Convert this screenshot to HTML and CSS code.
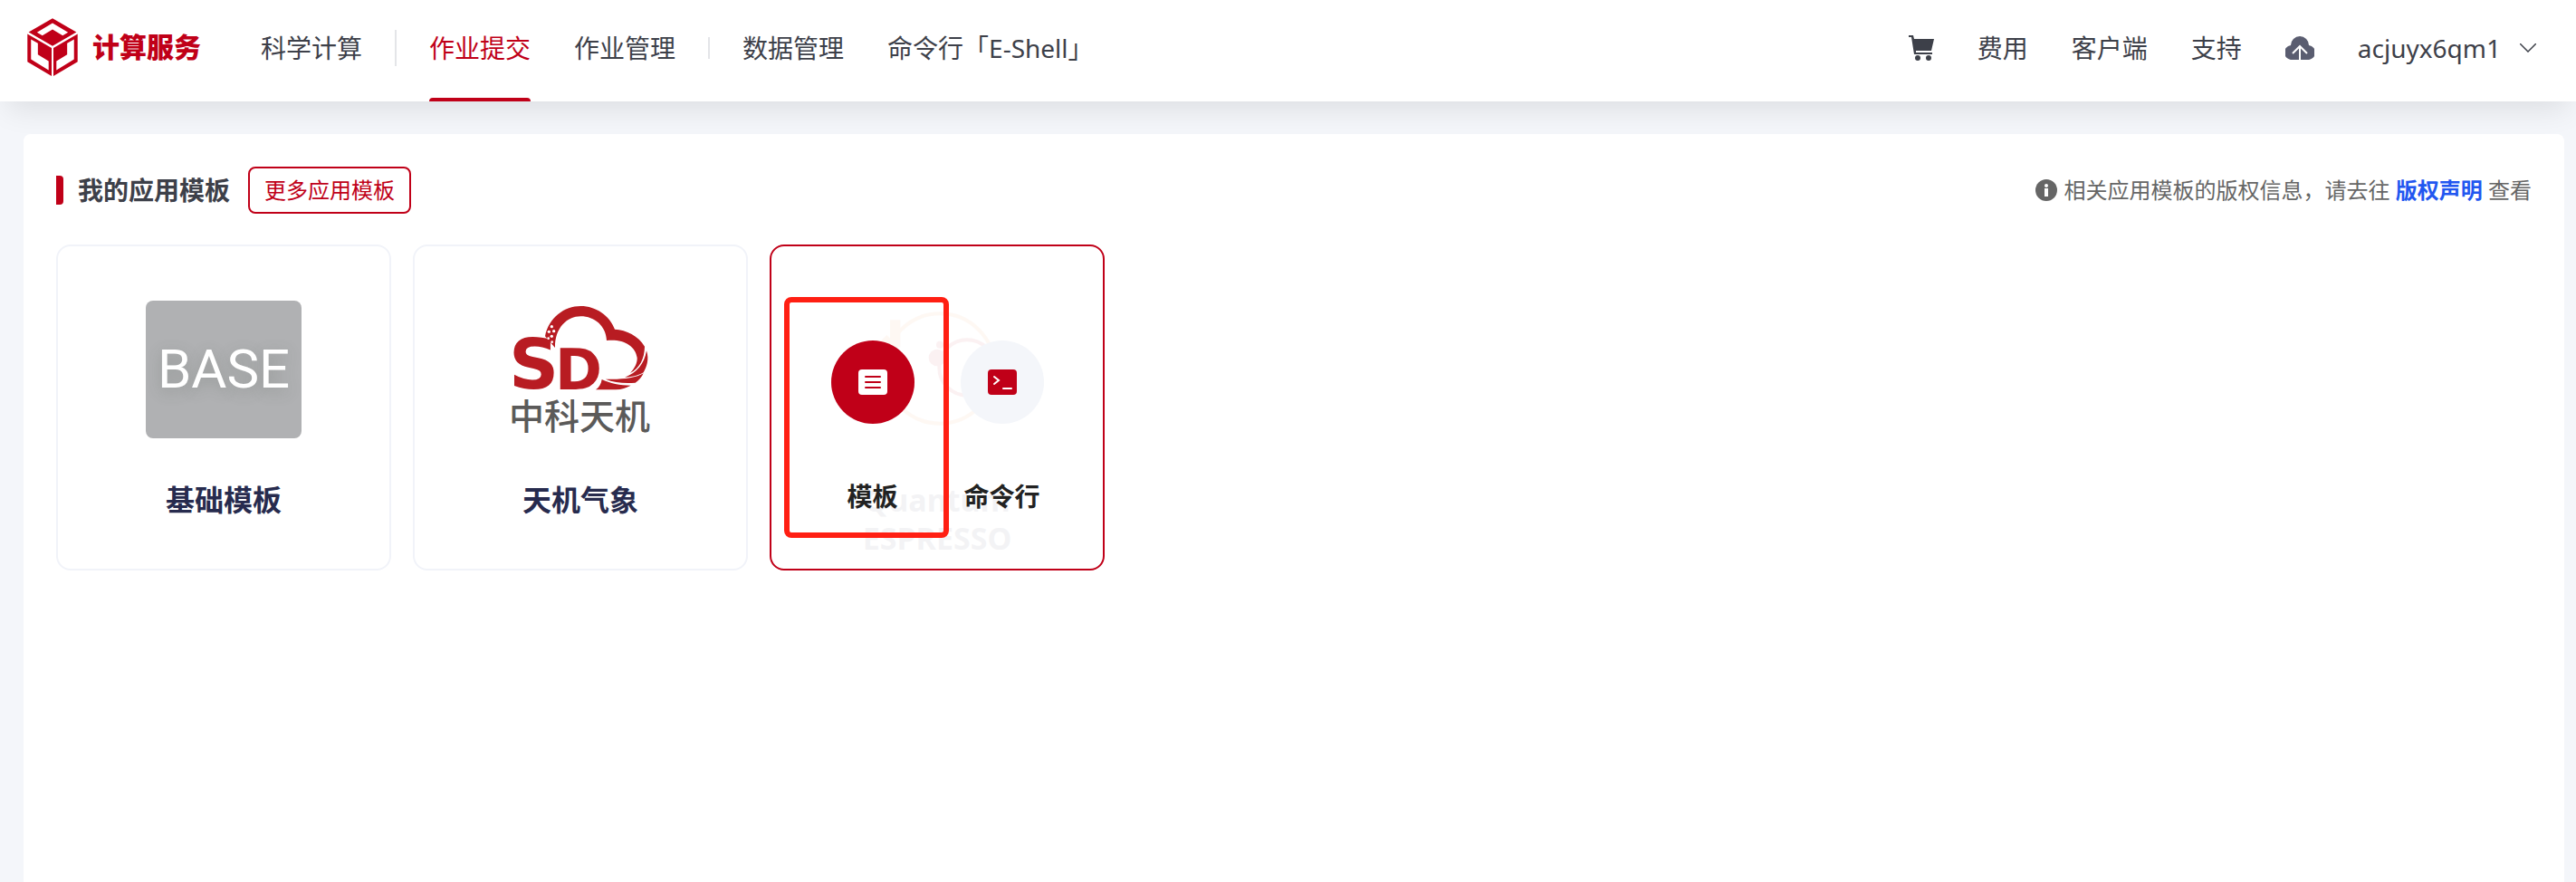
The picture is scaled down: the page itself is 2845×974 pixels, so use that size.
FILE: index.html
```html
<!DOCTYPE html>
<html lang="zh-CN">
<head>
    <meta charset="UTF-8">
    <meta name="viewport" content="width=device-width, initial-scale=1.0">
    <title>计算服务</title>
    <link rel="stylesheet" href="styles.css">
</head>
<body>
    <header class="header">
        <a class="logo" href="#">
            <svg class="logo-icon" viewBox="30 28 168 194">
                <path fill-rule="evenodd" d="M114 29L194 75L114 121L34 75ZM62 76L80 86L114 66L148 86L166 76L114 45Z"/>
                <path fill-rule="evenodd" d="M30 81L111 128V222L30 174ZM42 99V166L101 202V172L65 150V112Z"/>
                <path fill-rule="evenodd" d="M198 81L117 128V222L198 174ZM186 99V166L127 202V172L163 150V112Z"/>
            </svg>
            <span class="logo-text">计算服务</span>
        </a>
        <nav class="nav">
            <a href="#">科学计算</a>
            <span class="line line-tall"></span>
            <a class="active" href="#">作业提交</a>
            <a class="next" href="#">作业管理</a>
            <span class="line"></span>
            <a href="#">数据管理</a>
            <a class="next" href="#">命令行「E-Shell」</a>
        </nav>
        <div class="tools">
            <a href="#" aria-label="购物车">
                <svg class="cart" viewBox="0 0 28 28">
                    <path d="M0 0H5L6 4H28L25 17H8V19H26V21H6L3 2H0Z"/>
                    <circle cx="10" cy="25" r="3"/>
                    <circle cx="22" cy="25" r="3"/>
                </svg>
            </a>
            <a href="#">费用</a>
            <a href="#">客户端</a>
            <a href="#">支持</a>
            <a href="#" aria-label="上传">
                <svg class="cloud" viewBox="0 0 32 26">
                    <path d="M8 26A8 8 0 0 1 6 10A10 10 0 0 1 26 10A8 8 0 0 1 24 26Z"/>
                    <path class="arrow" d="M16 26V12M8 19L16 11L24 19"/>
                </svg>
            </a>
            <button class="user" type="button">
                acjuyx6qm1
                <svg class="chevron" viewBox="0 0 18 10"><path d="M0 0L9 9L18 0"/></svg>
            </button>
        </div>
    </header>

    <main class="panel">
        <div class="panel-head">
            <h1 class="title">我的应用模板</h1>
            <button class="more" type="button">更多应用模板</button>
            <p class="tip">
                <svg class="info" viewBox="0 0 24 24">
                    <circle cx="12" cy="12" r="12"/>
                    <path d="M10 10H14V19H10Z"/>
                    <circle class="dot" cx="12" cy="7" r="2"/>
                </svg>
                <span>相关应用模板的版权信息，请去往 <a href="#">版权声明</a> 查看</span>
            </p>
        </div>

        <div class="cards">
            <section class="card">
                <div class="picture base">BASE</div>
                <h2>基础模板</h2>
            </section>

            <section class="card">
                <svg class="picture" viewBox="345 246 516 456">
                    <g fill="#b81c22">
                        <path d="M486 364C498 302 550 264 604 264C655 264 700 296 717 341C755 343 795 362 816 398C815 440 800 468 768 486C785 468 792 450 791 435C785 395 745 372 690 378C688 330 650 298 604 298C560 298 518 335 519 402Z"/>
                        <path d="M822 412C832 440 822 468 812 484C795 494 770 500 750 500C790 485 815 455 822 412Z"/>
                        <path d="M686 506C740 508 785 503 812 487C806 500 797 510 785 518C750 521 715 518 686 506Z"/>
                        <path d="M674 507C700 520 735 527 770 527C755 535 740 540 720 541H654C665 533 672 522 674 507Z"/>
                        <text class="sd" x="366" y="538" font-size="230">S</text>
                        <text class="sd" x="519" y="540" font-size="188">D</text>
                    </g>
                    <g fill="#fff">
                        <circle cx="508" cy="332" r="5"/>
                        <circle cx="499" cy="349" r="5"/>
                        <circle cx="515" cy="347" r="5"/>
                        <circle cx="508" cy="364" r="5"/>
                        <circle cx="497" cy="371" r="4"/>
                        <circle cx="509" cy="383" r="4"/>
                    </g>
                    <text class="brand" x="366" y="672">中科天机</text>
                </svg>
                <h2>天机气象</h2>
            </section>

            <section class="card selected">
                <div class="faded">
                    <svg class="picture" viewBox="345 246 516 456">
                        <g fill="none" stroke-width="12">
                            <circle cx="612" cy="471" r="182" stroke="#f08030"/>
                            <circle cx="702" cy="468" r="92" stroke="#c00018"/>
                            <path stroke="#f08030" stroke-width="34" d="M464 310V400M424 372L464 410"/>
                        </g>
                        <circle cx="603" cy="435" r="28" fill="#c00018"/>
                        <circle cx="612" cy="392" r="12" fill="#c00018"/>
                    </svg>
                    <h2>Quantum ESPRESSO</h2>
                </div>
                <div class="actions">
                    <button type="button">
                        <span class="round red">
                            <svg viewBox="0 0 32 28">
                                <rect width="32" height="28" rx="4" fill="#fff"/>
                                <path d="M8 8H24M8 14H24M8 20H24" stroke="#c00018"/>
                            </svg>
                        </span>
                        模板
                    </button>
                    <button type="button">
                        <span class="round">
                            <svg viewBox="0 0 32 28">
                                <rect width="32" height="28" rx="4" fill="#c00018"/>
                                <path d="M7 8L12 12L7 16M17 21H26" stroke="#fff"/>
                            </svg>
                        </span>
                        命令行
                    </button>
                </div>
                <div class="mark"></div>
            </section>
        </div>
    </main>
</body>
</html>
```

FILE: styles.css
```css
*{
    margin: 0;
    padding: 0;
    box-sizing: border-box;
}
body{
    min-height: 100vh;
    display: flex;
    flex-direction: column;
    background: #f4f6fa;
    color: #3d4049;
    font-family: "Noto Sans", "Noto Sans CJK SC", sans-serif;
    font-size: 28px;
    line-height: 40px;
}
a{
    color: inherit;
    text-decoration: none;
}
button{
    border: 0;
    background: none;
    color: inherit;
    font: inherit;
    cursor: pointer;
}
svg{
    display: block;
}

/* top bar */
.header{
    height: 112px;
    display: flex;
    align-items: center;
    padding: 0 44px 6px 30px;
    background: #fff;
    box-shadow: 0 16px 32px -8px rgba(0, 0, 0, 0.1);
}
.logo{
    display: flex;
    align-items: center;
    gap: 16px;
    padding-bottom: 2px;
    color: #c00018;
}
.logo-icon{
    width: 56px;
    height: 64px;
    fill: #c00018;
}
.logo-text{
    font-size: 30px;
    font-weight: 900;
}
.nav{
    display: flex;
    align-items: center;
    margin-left: 66px;
}
.nav a{
    position: relative;
}
.nav .next{
    margin-left: 48px;
}
.nav .active{
    color: #c00018;
}
.nav .active::after{
    content: "";
    position: absolute;
    left: 0;
    right: 0;
    bottom: -39px;
    height: 4px;
    border-radius: 4px 4px 0 0;
    background: #c00018;
}
.line{
    width: 2px;
    height: 24px;
    margin: 0 36px;
    background: #e4e5e8;
}
.line-tall{
    height: 40px;
}
.tools{
    display: flex;
    align-items: center;
    gap: 48px;
    margin-left: auto;
}
.cart{
    width: 28px;
    height: 28px;
    fill: #3d4049;
}
.cloud{
    width: 32px;
    height: 26px;
    fill: #5a5d70;
}
.arrow{
    fill: none;
    stroke: #fff;
    stroke-width: 2;
}
.user{
    display: flex;
    align-items: center;
    gap: 21px;
}
.chevron{
    width: 18px;
    height: 10px;
    fill: none;
    stroke: #3d4049;
    stroke-width: 1.5;
}

/* content */
.panel{
    position: relative;
    flex: 1;
    margin: 36px 13px 0 26px;
    padding: 36px;
    border-radius: 8px 8px 0 0;
    background: #fff;
}
.panel-head{
    display: flex;
    align-items: center;
    margin-bottom: 34px;
}
.title{
    display: flex;
    align-items: center;
    gap: 16px;
    font-size: 28px;
}
.title::before{
    content: "";
    width: 8px;
    height: 32px;
    border-radius: 0 4px 4px 0;
    background: #c00018;
}
.more{
    height: 52px;
    margin-left: 20px;
    padding: 0 16px;
    border: 2px solid #c00018;
    border-radius: 8px;
    color: #c00018;
    font-size: 24px;
}
.tip{
    display: flex;
    align-items: center;
    gap: 8px;
    margin-left: auto;
    color: #666;
    font-size: 24px;
}
.tip a{
    color: #2257f0;
    font-weight: bold;
}
.info{
    width: 24px;
    height: 24px;
    fill: #666;
}
.info path, .info .dot{
    fill: #fff;
}
.cards{
    display: flex;
    flex-wrap: wrap;
    gap: 24px;
}
.card{
    position: relative;
    width: 370px;
    height: 360px;
    padding-top: 60px;
    border: 2px solid #f1f3f9;
    border-radius: 16px;
    text-align: center;
}
.card.selected{
    border-color: #c00018;
}
.card h2{
    margin-top: 47px;
    padding: 0 80px;
    color: #272b4e;
    font-size: 32px;
    line-height: 42px;
}
.picture{
    width: 172px;
    height: 152px;
    margin: 0 auto;
    overflow: visible;
}
.base{
    border-radius: 8px;
    background: #b0b1b3;
    color: #fff;
    font-family: Roboto, sans-serif;
    font-size: 60px;
    line-height: 152px;
    text-shadow: 0 4px 16px rgba(80, 90, 80, 0.3);
}
.sd{
    font-family: "DejaVu Sans", sans-serif;
    font-weight: bold;
}
.brand{
    fill: #5b5a59;
    font-family: "Noto Sans CJK SC", sans-serif;
    font-size: 117px;
    font-weight: 500;
}
.faded{
    opacity: 0.05;
}
.card .faded h2{
    font-size: 34px;
}
.actions{
    position: absolute;
    inset: 0;
    display: flex;
    justify-content: center;
    align-items: flex-start;
    padding-top: 104px;
}
.actions button{
    width: 143px;
    display: flex;
    flex-direction: column;
    align-items: center;
    gap: 60px;
    color: #222;
    font-weight: bold;
}
.round{
    width: 92px;
    height: 92px;
    display: flex;
    align-items: center;
    justify-content: center;
    border-radius: 50%;
    background: #f4f6fa;
}
.round.red{
    background: #c00018;
}
.round svg{
    width: 32px;
    height: 28px;
    fill: none;
    stroke-width: 2;
    stroke-linecap: round;
}
/* highlight drawn over the first action */
.mark{
    position: absolute;
    left: 14px;
    top: 56px;
    width: 182px;
    height: 266px;
    border: 6px solid #ff1f13;
    border-radius: 8px;
}
```
